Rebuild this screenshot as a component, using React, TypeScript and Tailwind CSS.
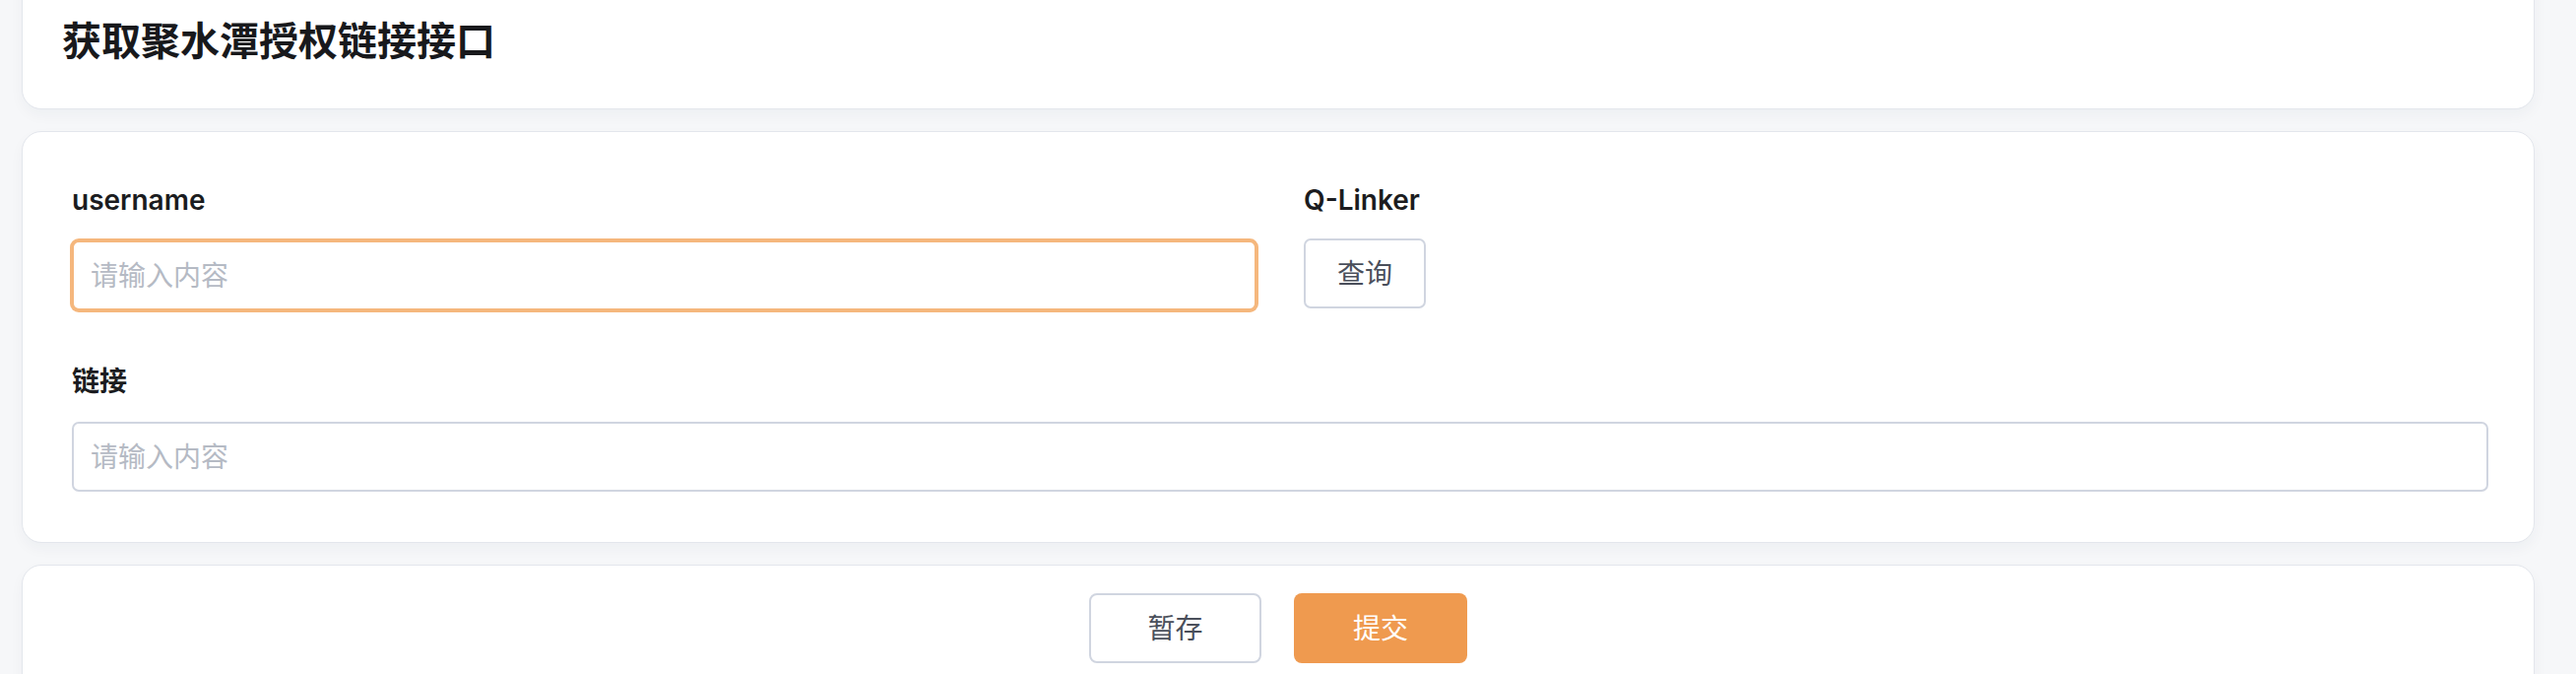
import { useState } from "react";

const font = "font-['Inter','Noto_Sans_CJK_SC',sans-serif]";

const Card = ({ className, children }: { className?: string; children: React.ReactNode }) => (
  <div
    className={`rounded-[20px] border border-[#e3e6ec] bg-white shadow-[0_6px_14px_rgba(30,40,70,0.04)] ${className ?? ""}`}
  >
    {children}
  </div>
);

const Field = ({
  label,
  focused,
  value,
  onChange,
}: {
  label: string;
  focused?: boolean;
  value: string;
  onChange: (v: string) => void;
}) => (
  <div className="flex flex-col">
    <label className="mb-[20px] text-[28px] leading-[42px] font-semibold text-[#1b1c20]">{label}</label>
    <input
      value={value}
      onChange={(e) => onChange(e.target.value)}
      placeholder="请输入内容"
      className={`h-[71px] w-full rounded-[7px] border-2 bg-white px-[17px] text-[28px] text-[#333] outline-none placeholder:text-[#b5bac4] ${
        focused
          ? "border-[#f5b77d] shadow-[0_0_0_2px_#f5b77d]"
          : "border-[#d0d5e0]"
      }`}
    />
  </div>
);

export default function App() {
  const [username, setUsername] = useState("");
  const [link, setLink] = useState("");

  return (
    <div className={`min-h-screen bg-[#f6f7f9] pl-[22px] pr-[42px] ${font}`}>
      <div className="flex flex-col gap-[22px]">
        <Card className="-mt-[30px] pl-[40px] pt-[41px] pb-[38px]">
          <h1 className="text-[40px] leading-[60px] font-bold text-[#18191c]">
            获取聚水潭授权链接接口
          </h1>
        </Card>

        <Card className="pl-[50px] pr-[46px] pt-[48px] pb-[51px]">
          <div className="grid grid-cols-2 gap-x-[48px] gap-y-[51px]">
            <Field label="username" focused value={username} onChange={setUsername} />
            <div className="flex flex-col">
              <span className="mb-[18px] text-[28px] leading-[42px] font-semibold text-[#1b1c20]">Q-Linker</span>
              <button className="h-[71px] w-[124px] rounded-[7px] border-2 border-[#d0d5e0] bg-white text-[28px] text-[#4a4f5b]">
                查询
              </button>
            </div>
            <div className="col-span-2">
              <Field label="链接" value={link} onChange={setLink} />
            </div>
          </div>
        </Card>

        <Card className="pt-[28px] pb-[40px]">
          <div className="flex justify-center gap-[33px]">
            <button className="h-[71px] w-[175px] rounded-[8px] border-2 border-[#d0d5e0] bg-white text-[28px] text-[#4a4f5b]">
              暂存
            </button>
            <button className="h-[71px] w-[176px] rounded-[8px] bg-[#ef9a4f] text-[28px] text-white">
              提交
            </button>
          </div>
        </Card>
      </div>
    </div>
  );
}
